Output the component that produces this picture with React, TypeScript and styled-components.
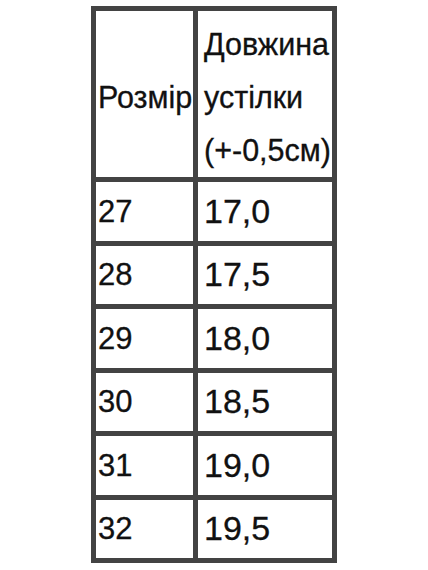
import React from "react";
import styled, { createGlobalStyle } from "styled-components";

const Global = createGlobalStyle`
  html, body { margin: 0; padding: 0; background: #ffffff; }
  body { font-family: "Liberation Sans", Arial, sans-serif; color: #111111; }
`;

const Page = styled.div`
  display: flex;
  justify-content: center;
  padding-top: 6px;
`;

const Table = styled.table`
  border-collapse: separate;
  border-spacing: 0;
  table-layout: fixed;
  border-top: 5px solid #434343;
  border-left: 5px solid #434343;
`;

const Cell = styled.td<{ $wide?: boolean; $big?: boolean; $head?: boolean }>`
  box-sizing: border-box;
  width: ${(p) => (p.$wide ? "139px" : "102px")};
  height: ${(p) => (p.$head ? "171px" : "63.5px")};
  border-right: 5px solid #434343;
  border-bottom: 5px solid #434343;
  padding: ${(p) => (p.$head ? "6px" : "0")} 0 0 ${(p) => (p.$wide ? "6px" : "2px")};
  vertical-align: middle;
  font-size: ${(p) => (p.$big ? "34px" : p.$head ? "30.5px" : "31px")};
  line-height: ${(p) => (p.$head ? "53px" : "1.2")};
  white-space: nowrap;
  overflow: visible;
  -webkit-text-stroke: 0.3px #111111;
`;

const rows: [string, string][] = [
  ["27", "17,0"],
  ["28", "17,5"],
  ["29", "18,0"],
  ["30", "18,5"],
  ["31", "19,0"],
  ["32", "19,5"],
];

export default function App() {
  return (
    <>
      <Global />
      <Page>
        <Table>
          <tbody>
            <tr>
              <Cell $head>Розмір</Cell>
              <Cell $head $wide>
                Довжина
                <br />
                устілки
                <br />
                (+-0,5см)
              </Cell>
            </tr>
            {rows.map(([size, len]) => (
              <tr key={size}>
                <Cell>{size}</Cell>
                <Cell $wide $big>
                  {len}
                </Cell>
              </tr>
            ))}
          </tbody>
        </Table>
      </Page>
    </>
  );
}
